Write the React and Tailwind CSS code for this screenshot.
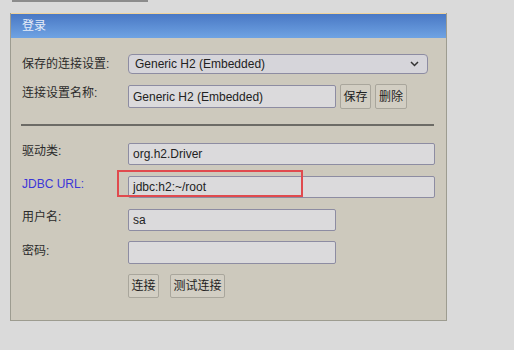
import React from "react";

const font = { fontFamily: '"Liberation Sans", Arial, "Noto Sans CJK SC", sans-serif' };

const Field = ({ value = "", width = "w-[308px]" }) => (
  <div
    className={`${width} h-full border border-[#8d8ca2] bg-[#dbdadc] rounded-[2px] pl-[4px] flex items-center text-[12px] text-[#222]`}
  >
    {value}
  </div>
);

const Btn = ({ children, className = "" }) => (
  <button
    className={`h-full px-0 whitespace-nowrap flex items-center justify-center border border-[#a9a69c] rounded-[2px] bg-[#d2cec3] text-[12px] text-[#222] ${className}`}
  >
    {children}
  </button>
);

const Label = ({ children, blue }) => (
  <div className={`w-[106px] shrink-0 text-[12px] leading-[16px] ${blue ? "text-[#3b36d8]" : "text-[#2b2b2b]"}`}>
    {children}
  </div>
);

export default function App() {
  return (
    <div className="w-[514px] h-[350px] bg-[#dadada] overflow-hidden" style={font}>
      <div className="ml-[12px] w-[136px] h-[2px] bg-[#8c8c8c]" />

      <div className="ml-[10px] mt-[11px] w-[437px] h-[308px] bg-[#cdc9bd] border-x border-b border-[#9d9c90] flex flex-col">
        {/* header */}
        <div className="h-[25px] border-t border-[#efd29a] bg-gradient-to-b from-[#4a78c4] to-[#6fa3e3] flex items-center pl-[11px] text-[12px] text-[#e6edf8]">
          登录
        </div>

        <div className="pl-[11px] pr-[11px] flex flex-col">
          {/* saved settings */}
          <div className="mt-[16px] h-[20px] flex items-center">
            <Label>保存的连接设置:</Label>
            <div className="w-[300px] h-full border border-[#8d8ca2] bg-[#d6d5da] rounded-[4px] pl-[6px] pr-[8px] flex items-center justify-between text-[12px] text-[#222]">
              <span>Generic H2 (Embedded)</span>
              <svg width="9" height="6" viewBox="0 0 9 6" fill="none">
                <path d="M1 1l3.5 3.5L8 1" stroke="#333" strokeWidth="1.5" />
              </svg>
            </div>
          </div>

          {/* name */}
          <div className="mt-[10px] h-[25px] flex items-start">
            <Label>
              <div className="mt-[1px]">连接设置名称:</div>
            </Label>
            <div className="h-[23px] mt-[1px] flex">
              <Field value="Generic H2 (Embedded)" width="w-[208px]" />
            </div>
            <div className="h-full flex ml-[4px] gap-[4px]">
              <Btn className="w-[31px]">保存</Btn>
              <Btn className="w-[32px]">删除</Btn>
            </div>
          </div>

          <div className="mt-[15px] mr-[1px] ml-[-1px] border-t-2 border-[#6c6b66]" />

          {/* driver */}
          <div className="mt-[17px] h-[22px] flex items-start">
            <Label>驱动类:</Label>
            <Field value="org.h2.Driver" />
          </div>

          {/* jdbc url */}
          <div className="mt-[11px] h-[22px] flex items-start relative">
            <Label blue>JDBC URL:</Label>
            <Field value="jdbc:h2:~/root" />
            <div className="absolute left-[95px] top-[-6px] w-[186px] h-[27px] border-2 border-[#e04a4e]" />
          </div>

          {/* user */}
          <div className="mt-[11px] h-[22px] flex items-start">
            <Label>用户名:</Label>
            <Field value="sa" width="w-[208px]" />
          </div>

          {/* password */}
          <div className="mt-[10px] h-[23px] flex items-start">
            <Label>
              <div className="pt-[2px]">密码:</div>
            </Label>
            <Field width="w-[208px]" />
          </div>

          {/* buttons */}
          <div className="mt-[10px] h-[24px] flex">
            <div className="w-[106px]" />
            <Btn className="w-[31px]">连接</Btn>
            <Btn className="w-[55px] ml-[11px]">测试连接</Btn>
          </div>
        </div>
      </div>
    </div>
  );
}
